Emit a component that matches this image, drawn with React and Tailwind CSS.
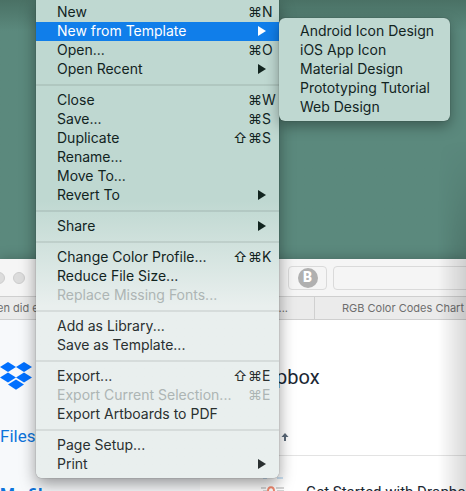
import React from "react";

const groups = [
  [
    { label: "New", keys: "⌘N" },
    { label: "New from Template", submenu: true, open: true },
    { label: "Open...", keys: "⌘O" },
    { label: "Open Recent", submenu: true },
  ],
  [
    { label: "Close", keys: "⌘W" },
    { label: "Save...", keys: "⌘S" },
    { label: "Duplicate", keys: "⌘S", shift: true },
    { label: "Rename..." },
    { label: "Move To..." },
    { label: "Revert To", submenu: true },
  ],
  [{ label: "Share", submenu: true }],
  [
    { label: "Change Color Profile...", keys: "⌘K", shift: true },
    { label: "Reduce File Size..." },
    { label: "Replace Missing Fonts...", disabled: true },
  ],
  [{ label: "Add as Library..." }, { label: "Save as Template..." }],
  [
    { label: "Export...", keys: "⌘E", shift: true },
    { label: "Export Current Selection...", keys: "⌘E", disabled: true },
    { label: "Export Artboards to PDF" },
  ],
  [{ label: "Page Setup..." }, { label: "Print", submenu: true }],
];

const templates = [
  "Android Icon Design",
  "iOS App Icon",
  "Material Design",
  "Prototyping Tutorial",
  "Web Design",
];

function Arrow() {
  return (
    <svg viewBox="0 0 8 10" className="ml-[10px] h-[10px] w-2 fill-current" aria-hidden="true">
      <path d="M0 0L8 5L0 10Z" />
    </svg>
  );
}

function MenuItem({ item }) {
  const tone = item.open
    ? "bg-[#107eea] text-white"
    : item.disabled
      ? "text-[#adb5b4]"
      : "";
  return (
    <button
      type="button"
      role="menuitem"
      disabled={item.disabled}
      className={`flex h-[19px] w-full items-center pb-[2px] pl-[21px] text-left whitespace-nowrap ${tone}`}
    >
      <span className="flex-1">{item.label}</span>
      {item.shift && <span className="w-[15px]">⇧</span>}
      <span className="w-[31px]">
        {item.submenu ? <Arrow /> : item.keys}
      </span>
    </button>
  );
}

function FileMenu() {
  return (
    <div
      role="menu"
      aria-label="File"
      className="absolute top-0 left-9 w-[243px] rounded-b-md bg-linear-to-b from-[#bfd8d1] from-0% via-[#bfd8d1] via-42% to-[#e9efee] to-64% pt-[3px] pb-1 text-[#12241f] shadow-[0_6px_16px_rgba(0,0,0,0.4),0_0_1px_rgba(0,0,0,0.6)]"
    >
      {groups.map((group, i) => (
        <div key={i} className={i > 3 ? "text-[#2a3030]" : ""}>
          {i > 0 && (
            <div role="separator" className="flex h-3 items-center">
              <div className="h-[2px] w-full bg-black/8" />
            </div>
          )}
          {group.map((item) => (
            <div key={item.label} className="relative">
              <MenuItem item={item} />
              {item.open && (
                <div
                  role="menu"
                  aria-label={item.label}
                  className="absolute -top-1 left-full w-[171px] rounded-md bg-[#bfd8d1] py-1 text-[#12241f] shadow-[0_5px_14px_rgba(0,0,0,0.35),0_0_1px_rgba(0,0,0,0.6)]"
                >
                  {templates.map((name) => (
                    <button
                      key={name}
                      type="button"
                      role="menuitem"
                      className="flex h-[19px] w-full items-center pb-[2px] pl-[21px] whitespace-nowrap"
                    >
                      {name}
                    </button>
                  ))}
                </div>
              )}
            </div>
          ))}
        </div>
      ))}
    </div>
  );
}

function DropboxLogo() {
  return (
    <svg viewBox="0 0 32 28" className="h-7 w-8 fill-[#0070ff]" role="img" aria-label="Dropbox">
      <path d="M8 0L16 5L8 10L0 5Z" />
      <path d="M24 0L32 5L24 10L16 5Z" />
      <path d="M8 10.5L16 15.5L8 20.5L0 15.5Z" />
      <path d="M24 10.5L32 15.5L24 20.5L16 15.5Z" />
      <path d="M16 17.5L24 22.5L16 27.7L8 22.5Z" />
    </svg>
  );
}

function Toolbar() {
  return (
    <div className="flex h-[37px] flex-none items-center bg-[#f5f5f5]">
      <div className="-ml-[7px] flex flex-none gap-2">
        <span className="size-3 rounded-full border border-[#cdcdcd] bg-[#dcdcdc]" />
        <span className="size-3 rounded-full border border-[#cdcdcd] bg-[#dcdcdc]" />
      </div>
      <button
        type="button"
        aria-label="Bold extension"
        className="ml-[263px] flex h-6 w-[39px] flex-none items-center justify-center rounded border border-[#dadada]"
      >
        <span className="flex size-5 items-center justify-center rounded-full bg-[#b0b0b0] text-[14px] font-black text-white">
          B
        </span>
      </button>
      <input
        type="text"
        aria-label="Address"
        className="ml-[6px] -mr-2 h-6 min-w-0 flex-1 rounded border border-[#dadada] bg-transparent"
      />
    </div>
  );
}

function TabBar() {
  return (
    <div className="flex h-6 flex-none items-center border-y border-[#cfcfcf] bg-[#ebebeb] font-['Inter',sans-serif] text-[11px] whitespace-nowrap text-[#6e6e6e]">
      <button type="button" className="flex h-full w-[315px] flex-none items-center justify-between border-r border-[#d0d0d0] pr-[26px]">
        <span className="-ml-[3px]">en did e</span>
        <span>...</span>
      </button>
      <button type="button" className="flex h-full flex-1 items-center pl-[27px]">
        RGB Color Codes Chart
      </button>
    </div>
  );
}

function PageContent() {
  return (
    <div className="flex flex-1">
      <nav className="w-[200px] flex-none bg-[#f7f9fb] pt-[42px] text-[17px]">
        <DropboxLogo />
        <a href="#files" className="mt-[34px] block leading-6 text-[#0d74dc]">
          Files
        </a>
        <a href="#my-files" className="mt-[34px] block leading-6 font-bold text-[#0d74dc]">
          My files
        </a>
      </nav>
      <main className="min-w-0 flex-1 text-[#1b2733]">
        <h1 className="flex h-[113px] items-center pl-[45px] text-[20px] leading-6">Dropbox</h1>
        <div className="h-[23px] border-b border-[#e3e3e3] pl-[81px]">
          <svg viewBox="0 0 8 8" className="h-2 w-2 fill-[#5b6979]" aria-hidden="true">
            <path d="M4 0L7.5 4H5V8H3V4H.5Z" />
          </svg>
        </div>
        <div className="flex items-start pt-[21px] pl-[60px]">
          <svg viewBox="0 0 26 30" className="h-[30px] w-[26px] flex-none" fill="none" aria-hidden="true">
            <path d="M3 1h4M9 0h5M17 1h6" stroke="#cfe4f5" strokeWidth="2" />
            <path d="M1 11h5M16 11h8M3 14h4M17 14h7" stroke="#d5d5d5" strokeWidth="2" />
            <path d="M8 14C8 9 14 9 14 14" stroke="#f48a70" strokeWidth="2" />
          </svg>
          <a href="#start" className="mt-[3px] ml-5 text-[15px] leading-6 whitespace-nowrap">
            Get Started with Dropbox
          </a>
        </div>
      </main>
    </div>
  );
}

export default function App() {
  return (
    <div className="relative flex h-screen flex-col overflow-hidden bg-[#5b897d] font-['Inter','DejaVu_Sans',sans-serif] text-[14px]">
      <div className="h-[259px] flex-none bg-linear-to-b from-[#4a7165] from-0% via-[#5b897d] via-12% to-[#5b897d]" />
      <section className="flex min-h-0 flex-1 flex-col bg-white font-['Roboto',sans-serif] shadow-[0_0_12px_rgba(0,0,0,0.25)]">
        <Toolbar />
        <TabBar />
        <PageContent />
      </section>
      <div className="pointer-events-none absolute top-[140px] right-0 bottom-0 w-7 bg-linear-to-r from-transparent to-black/15 mask-t-from-65% mask-t-to-100%" />
      <FileMenu />
    </div>
  );
}
